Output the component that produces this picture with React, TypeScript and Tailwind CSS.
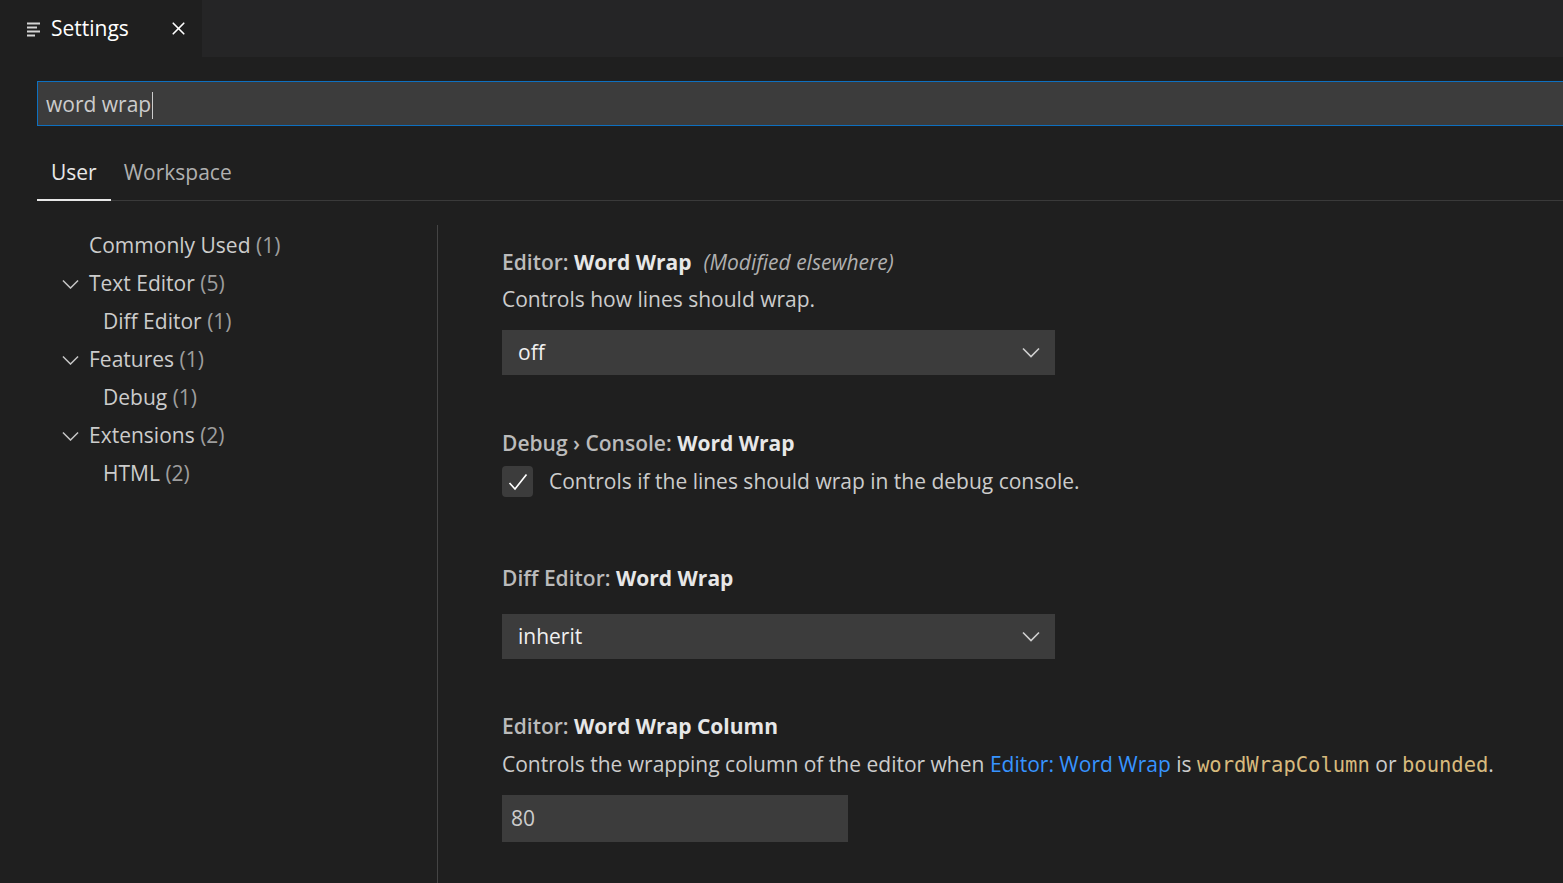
import { X } from "lucide-react";

const font = { fontFamily: '"Open Sans", "Noto Sans", sans-serif' };
const mono = { fontFamily: '"DejaVu Sans Mono", "Liberation Mono", monospace', fontSize: "20.5px" };

function SettingsIcon() {
	return (
		<svg width="15" height="16" viewBox="0 0 15 16" fill="none" stroke="#d4d4d4" strokeWidth="1.8">
			<path d="M1 2.5h13M1 6.5h10M1 10.5h13M1 14.5h8" />
		</svg>
	);
}

function Chevron({ w, color }: { w: number; color: string }) {
	return (
		<svg width={w} height={w / 2 + 2} viewBox="0 0 18 11" fill="none" stroke={color} strokeWidth="1.6">
			<path d="M1 1.5l8 8 8-8" />
		</svg>
	);
}

function TreeItem({
	label,
	count,
	level,
	expandable,
}: {
	label: string;
	count: number;
	level: number;
	expandable?: boolean;
}) {
	return (
		<div className="flex h-[38px] items-center">
			<div className="w-[52px] shrink-0 flex pl-[25px]">
				{expandable && <Chevron w={17} color="#c5c5c5" />}
			</div>
			<span className={level === 2 ? "pl-[14px] text-[#cccccc]" : "text-[#cccccc]"}>
				{label} <span className="text-[#9d9d9d]">({count})</span>
			</span>
		</div>
	);
}

function Select({ value }: { value: string }) {
	return (
		<div className="flex h-[45px] w-[553px] items-center justify-between bg-[#3c3c3c] pl-[16px] pr-[15px] text-[#f0f0f0]">
			<span>{value}</span>
			<Chevron w={18} color="#d0d0d0" />
		</div>
	);
}

function Title({ prefix, name, extra }: { prefix: string; name: string; extra?: string }) {
	return (
		<div className="h-[28px] leading-[28px] text-[#bbbbbb] font-semibold whitespace-nowrap">
			{prefix} <span className="text-[#e7e7e7] font-bold">{name}</span>
			{extra && <span className="ml-[12px] italic font-normal text-[#b0b0b0]">{extra}</span>}
		</div>
	);
}

export default function App() {
	return (
		<div className="h-[883px] w-full overflow-hidden bg-[#1f1f1f] text-[21px]" style={font}>
			<div className="flex h-[57px] bg-[#252526]">
				<div className="flex w-[202px] items-center bg-[#1f1f1f] pl-[26px]">
					<SettingsIcon />
					<span className="ml-[10px] text-[21px] text-white">Settings</span>
					<X size={21} strokeWidth={1.9} color="#ffffff" className="ml-auto mr-[13px]" />
				</div>
			</div>

			<div className="mt-[24px] ml-[37px] flex h-[45px] w-[1600px] items-center border border-[#0e70c0] bg-[#3c3c3c] pl-[8px] pt-[3px] text-[21px] text-[#cccccc]">
				word wrap
				<span className="ml-[1px] inline-block h-[27px] w-px bg-[#cccccc]" />
			</div>

			<div className="ml-[37px] flex h-[75px] items-end border-b border-[#3a3a3a] text-[21px]">
				<div className="flex h-full items-center border-b-2 border-[#e7e7e7] px-[14px] pt-[19px] text-[#e7e7e7] -mb-px">
					User
				</div>
				<div className="flex h-full items-center px-[13px] pt-[19px] text-[#b0b0b0]">Workspace</div>
			</div>

			<div className="flex">
				<div className="w-[437px] shrink-0 pt-[26px] pl-[37px] whitespace-nowrap">
					<TreeItem label="Commonly Used" count={1} level={1} />
					<TreeItem label="Text Editor" count={5} level={1} expandable />
					<TreeItem label="Diff Editor" count={1} level={2} />
					<TreeItem label="Features" count={1} level={1} expandable />
					<TreeItem label="Debug" count={1} level={2} />
					<TreeItem label="Extensions" count={2} level={1} expandable />
					<TreeItem label="HTML" count={2} level={2} />
				</div>
				<div className="mt-[24px] h-[658px] w-px bg-[#444444]" />
				<div className="flex-1 pl-[64px] pt-[47px] text-[#cccccc]">
					<Title prefix="Editor:" name="Word Wrap" extra="(Modified elsewhere)" />
					<div className="mt-[9px] h-[28px] leading-[28px]">Controls how lines should wrap.</div>
					<div className="mt-[17px]">
						<Select value="off" />
					</div>

					<div className="mt-[54px]">
						<Title prefix="Debug › Console:" name="Word Wrap" />
					</div>
					<div className="mt-[9px] flex h-[31px] items-center">
						<div className="flex h-[31px] w-[31px] items-center justify-center rounded-[4px] bg-[#3c3c3c]">
							<svg width="20" height="18" viewBox="0 0 20 18" fill="none" stroke="#ffffff" strokeWidth="1.7">
								<path d="M1.5 10l5.5 6L18.5 1.5" />
							</svg>
						</div>
						<span className="ml-[16px] whitespace-nowrap">Controls if the lines should wrap in the debug console.</span>
					</div>

					<div className="mt-[67px]">
						<Title prefix="Diff Editor:" name="Word Wrap" />
					</div>
					<div className="mt-[22px]">
						<Select value="inherit" />
					</div>

					<div className="mt-[53px]">
						<Title prefix="Editor:" name="Word Wrap Column" />
					</div>
					<div className="mt-[10px] h-[28px] whitespace-nowrap leading-[28px]">
						Controls the wrapping column of the editor when{" "}
						<span className="text-[#3794ff]">Editor: Word Wrap</span> is{" "}
						<span className="text-[#d7ba7d]" style={mono}>
							wordWrapColumn
						</span>{" "}
						or{" "}
						<span className="text-[#d7ba7d]" style={mono}>
							bounded
						</span>
						.
					</div>
					<div className="mt-[17px] flex h-[47px] w-[346px] items-center bg-[#3c3c3c] pl-[9px] text-[#cccccc]">80</div>
				</div>
			</div>
		</div>
	);
}
